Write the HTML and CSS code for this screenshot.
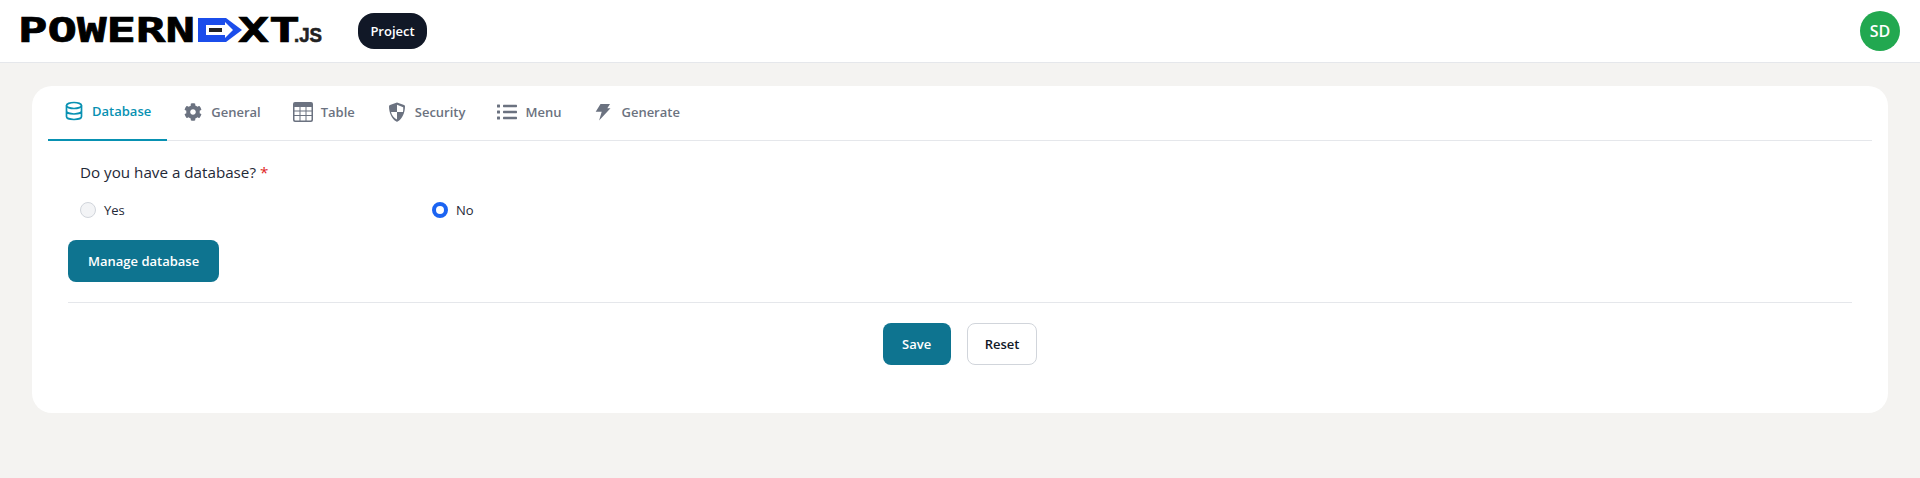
FILE: index.html
```html
<!DOCTYPE html>
<html lang="en">
<head>
<meta charset="utf-8">
<title>PowerNext.js</title>
<link rel="stylesheet" href="styles.css">
</head>
<body>
<header class="topbar">
  <div class="brand">
    <svg class="logo" width="306" height="44" viewBox="0 0 306 44" role="img" aria-label="PowerNext.js">
      <text class="logo-text" x="0" y="35" textLength="177" lengthAdjust="spacingAndGlyphs">POWERN</text>
      <path class="logo-mark" d="M180 11h28l16 12-16 12h-28zM188 18v10h19v3l8-8-8-8v3z"/>
      <rect class="logo-bar" x="191" y="21" width="13" height="4"/>
      <text class="logo-text" x="220" y="35" textLength="62" lengthAdjust="spacingAndGlyphs">XT</text>
      <text class="logo-js" x="276" y="35" textLength="28" lengthAdjust="spacingAndGlyphs">.JS</text>
    </svg>
    <button class="project">Project</button>
  </div>
  <div class="avatar">SD</div>
</header>
<main class="page">
  <section class="card">
    <nav class="tabs">
      <a class="tab active">
        <svg class="ic" width="20" height="20" viewBox="0 0 18 20" fill="none" stroke="currentColor" stroke-width="1.700"><ellipse cx="9" cy="4.500" rx="7.500" ry="3"/><path d="M1.500 4.500v11c0 1.700 3.400 3 7.500 3s7.500-1.300 7.500-3v-11M1.500 10c0 1.700 3.400 3 7.500 3s7.500-1.300 7.500-3"/></svg>
        Database
      </a>
      <a class="tab">
        <svg class="ic" width="20" height="20" viewBox="-28 -28 568 568" fill="currentColor"><path d="M487.4 315.700l-42.600-24.600c4.300-23.200 4.300-47 0-70.200l42.600-24.600c4.900-2.800 7.100-8.600 5.500-14-11.100-35.600-30-67.800-54.700-94.600-3.800-4.100-10-5.100-14.800-2.300L380.800 110c-17.900-15.400-38.500-27.300-60.800-35.100V25.800c0-5.600-3.900-10.500-9.400-11.700-36.700-8.200-74.300-7.800-109.200 0-5.500 1.200-9.400 6.100-9.400 11.700V75c-22.200 7.900-42.800 19.800-60.800 35.100L88.700 85.500c-4.900-2.800-11-1.900-14.800 2.300-24.700 26.700-43.600 58.900-54.700 94.600-1.700 5.400.6 11.200 5.500 14L67.300 221c-4.300 23.200-4.300 47 0 70.200l-42.600 24.600c-4.900 2.800-7.100 8.600-5.500 14 11.100 35.600 30 67.800 54.700 94.600 3.800 4.100 10 5.100 14.800 2.300l42.600-24.600c17.900 15.400 38.500 27.300 60.800 35.100v49.200c0 5.600 3.900 10.500 9.400 11.700 36.700 8.200 74.300 7.800 109.200 0 5.500-1.200 9.400-6.100 9.400-11.700v-49.200c22.200-7.900 42.800-19.800 60.800-35.100l42.600 24.600c4.900 2.800 11 1.900 14.800-2.300 24.700-26.700 43.600-58.900 54.700-94.600 1.500-5.500-.7-11.300-5.600-14.100zM256 336c-44.100 0-80-35.900-80-80s35.900-80 80-80 80 35.900 80 80-35.900 80-80 80z"/></svg>
        General
      </a>
      <a class="tab">
        <svg class="ic" width="20" height="20" viewBox="0 0 20 20" fill="currentColor"><path fill-rule="evenodd" d="M2 0h16a2 2 0 0 1 2 2v16a2 2 0 0 1-2 2H2a2 2 0 0 1-2-2V2a2 2 0 0 1 2-2zM1.500 5v3.500h5V5zM7.500 5v3.500h5V5zM13.500 5v3.500h5V5zM1.500 9.500V13h5V9.500zM7.500 9.500V13h5V9.500zM13.500 9.500V13h5V9.500zM1.500 14v3.500a1 1 0 0 0 1 1h4V14zM7.500 14v4.500h5V14zM13.500 14v4.500h4a1 1 0 0 0 1-1V14z"/></svg>
        Table
      </a>
      <a class="tab">
        <svg class="ic" width="20" height="20" viewBox="0 0 16 20" fill="currentColor"><path fill-rule="evenodd" d="M8 .5 15 3c.6.200 1 .8 1 1.400 0 6.300-2.700 12.300-7.400 15.100a1.200 1.200 0 0 1-1.200 0C2.700 16.700 0 10.700 0 4.400 0 3.800.4 3.200 1 3zM8 2.800V10h6c.2-1.500.3-3 .2-4.800zM8 10H2c.8 3.300 3 6.300 6 7.600z"/></svg>
        Security
      </a>
      <a class="tab">
        <svg class="ic" width="20" height="20" viewBox="0 0 20 20" fill="currentColor"><rect x="0" y="2.500" width="3" height="3" rx=".5"/><rect x="0" y="8.500" width="3" height="3" rx=".5"/><rect x="0" y="14.500" width="3" height="3" rx=".5"/><rect x="6" y="2.800" width="14" height="2.400" rx=".6"/><rect x="6" y="8.800" width="14" height="2.400" rx=".6"/><rect x="6" y="14.800" width="14" height="2.400" rx=".6"/></svg>
        Menu
      </a>
      <a class="tab">
        <svg class="ic" width="20" height="20" viewBox="0 0 15 20" fill="currentColor"><path d="M5 2h9.500l-2.700 4.300H15L3.600 18.500l2.600-8.700H.2z"/></svg>
        Generate
      </a>
    </nav>
    <form class="form">
      <p class="question">Do you have a database? <span class="req">*</span></p>
      <div class="radios">
        <label class="radio-cell"><span class="radio"></span>Yes</label>
        <label class="radio-cell"><span class="radio checked"></span>No</label>
      </div>
      <button type="button" class="btn primary manage">Manage database</button>
      <div class="actions">
        <button type="button" class="btn primary save">Save</button>
        <button type="button" class="btn ghost">Reset</button>
      </div>
    </form>
  </section>
</main>
</body>
</html>
```

FILE: styles.css
```css
* { box-sizing: border-box; }
html, body { margin: 0; height: 100%; }
body {
  background: #f4f3f1;
  font-family: "Open Sans", "Noto Sans", sans-serif;
  color: #1f2937;
}
.topbar {
  height: 63px;
  background: #fff;
  border-bottom: 1px solid #e5e7eb;
  display: flex;
  align-items: center;
  justify-content: space-between;
  padding: 0 20px;
}
.brand { display: flex; align-items: center; gap: 34px; }
.logo { display: block; margin: -4px 0 0 -2px; }
.logo-text {
  font-family: "DejaVu Sans Mono", monospace;
  font-weight: 700;
  font-size: 33px;
  fill: #000;
  stroke: #000;
  stroke-width: 0.700px;
}
.logo-js {
  font-family: "Liberation Sans", sans-serif;
  font-weight: 700;
  font-size: 20px;
  fill: #222;
  stroke: #222;
  stroke-width: 0.600px;
}
.logo-mark { fill: #1b4deb; fill-rule: evenodd; }
.logo-bar { fill: #222; }
.project {
  width: 69px;
  height: 36px;
  border: 0;
  border-radius: 16px;
  background: #111827;
  color: #fff;
  font: 600 13px "Open Sans", sans-serif;
  padding: 0;
}
.avatar {
  width: 40px;
  height: 40px;
  border-radius: 50%;
  background: #22a850;
  color: #fff;
  font-weight: 600;
  font-size: 16px;
  display: flex;
  align-items: center;
  justify-content: center;
}
.page { padding: 23px 32px; }
.card {
  background: #fff;
  border-radius: 20px;
  height: 327px;
  padding: 0 16px;
}
.tabs {
  display: flex;
  height: 55px;
  border-bottom: 1px solid #e5e7eb;
}
.tab {
  display: flex;
  align-items: center;
  gap: 8px;
  padding: 0 16px 3px;
  height: 55px;
  font-size: 13px;
  font-weight: 600;
  color: #6b7280;
}
.tab.active {
  color: #0891b2;
  border-bottom: 2px solid #0891b2;
}
.ic { display: block; flex: none; }
.form { padding: 0 20px; }
.question {
  margin: 0;
  padding: 20px 0 0 12px;
  font-size: 15.200px;
  line-height: 22px;
  color: #1f2937;
}
.req { color: #e02424; }
.radios {
  display: grid;
  grid-template-columns: 352px 1fr;
  padding: 17px 0 0 12px;
}
.radio-cell {
  display: flex;
  align-items: center;
  gap: 8px;
  font-size: 13px;
  line-height: 20px;
  color: #1f2937;
}
.radio {
  width: 16px;
  height: 16px;
  border-radius: 50%;
  background: #f3f4f6;
  border: 1px solid #d1d5db;
}
.radio.checked { background: #fff; border: 4px solid #1c64f2; }
.btn {
  height: 42px;
  border-radius: 8px;
  font: 600 13px "Open Sans", sans-serif;
  padding: 0 20px;
  border: 0;
}
.primary { background: #0e7490; color: #fff; }
.save { padding: 0 19.500px; }
.ghost { background: #fff; border: 1px solid #d1d5db; color: #111827; padding: 0 17px; }
.manage { display: block; margin-top: 20px; }
.actions {
  display: flex;
  justify-content: center;
  gap: 16px;
  margin-top: 20px;
  padding-top: 20px;
  border-top: 1px solid #e5e7eb;
}
```
